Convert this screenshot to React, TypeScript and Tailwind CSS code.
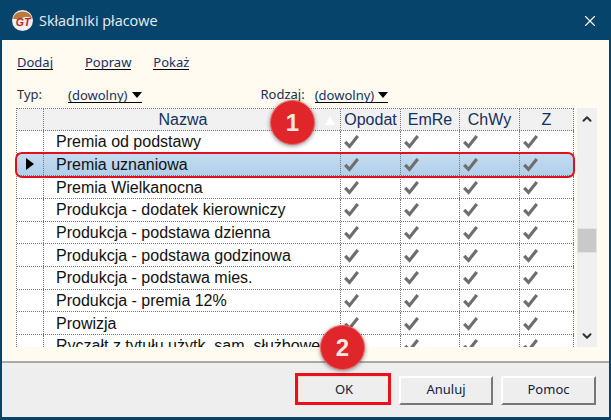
import React from "react";
import { X, ChevronUp, ChevronDown } from "lucide-react";

const rows = [
  "Premia od podstawy",
  "Premia uznaniowa",
  "Premia Wielkanocna",
  "Produkcja - dodatek kierowniczy",
  "Produkcja - podstawa dzienna",
  "Produkcja - podstawa godzinowa",
  "Produkcja - podstawa mies.",
  "Produkcja - premia 12%",
  "Prowizja",
  "Ryczałt z tytułu użytk. sam. służbowego",
];

const checkCols = ["w-[60px]", "w-[59px]", "w-[60px]", "w-[54px]"];

function Check() {
  return (
    <svg width="15" height="15" viewBox="0 0 15 15" className="block">
      <path d="M1.2 7.8 L5.5 12.4 L13.8 2" fill="none" stroke="#6e6e6e" strokeWidth="3.2" />
    </svg>
  );
}

function Logo() {
  return (
    <svg width="21" height="21" viewBox="0 0 20 20" className="block">
      <circle cx="10" cy="10" r="10" fill="#f4efe9" />
      <path d="M0.6 8 A10 10 0 0 1 19.4 8 Q12 4.5 8 9 Q4 9 0.6 8 Z" fill="#b9793c" />
      <text x="10.5" y="15.5" textAnchor="middle" fontSize="10" fontWeight="700" fontStyle="italic" fill="#b3262a" fontFamily="Liberation Sans, sans-serif">GT</text>
    </svg>
  );
}

function Badge({ n, className }: { n: number; className: string }) {
  return (
    <div
      className={`absolute flex h-[45px] w-[45px] items-center justify-center rounded-full border border-[#f0686a] bg-[#e0252b] text-[24px] font-bold text-[#fbe6e0] shadow-[0_1px_4px_rgba(0,0,0,0.45)] ${className}`}
    >
      {n}
    </div>
  );
}

function Dropdown({ className }: { className: string }) {
  return (
    <span className={`flex items-center gap-[4px] border-b border-black leading-[14px] text-[#14305e] ${className}`}>
      (dowolny)
      <span className="h-0 w-0 border-x-[5px] border-t-[6px] border-x-transparent border-t-black" />
    </span>
  );
}

export default function App() {
  return (
    <div className="relative flex h-[420px] w-[611px] flex-col overflow-hidden bg-[#07446b] pt-px font-['Liberation_Sans',sans-serif]">
      {/* title bar */}
      <div className="flex h-[39px] shrink-0 items-center pl-[12px] pr-[12px]">
        <Logo />
        <span className="ml-[6px] font-['Open_Sans',sans-serif] text-[14.4px] text-[#e8eff4]">Składniki płacowe</span>
        <X className="ml-auto h-[18px] w-[18px] text-white" strokeWidth={1.5} />
      </div>

      {/* content */}
      <div className="mx-[2px] flex h-[321px] shrink-0 flex-col bg-[#fffbf0] pl-[14px]">
        <div className="flex h-[33px] items-end pb-[3px] font-['Noto_Sans',sans-serif] text-[13px] text-[#14305e]">
          <span className="ml-[1px] border-b border-black leading-[14px]">Dodaj</span>
          <span className="ml-[32px] border-b border-black leading-[14px]">Popraw</span>
          <span className="ml-[22px] border-b border-black leading-[14px]">Pokaż</span>
        </div>
        <div className="mt-[14px] flex h-[16px] items-center font-['Noto_Sans',sans-serif] text-[13px] text-[#1c2c44]">
          <span className="ml-[1px] w-[51px]">Typ:</span>
          <Dropdown className="" />
          <span className="ml-[119px]">Rodzaj:</span>
          <Dropdown className="ml-[10px]" />
        </div>

        <div className="mt-[5px] flex items-start">
          {/* table */}
          <div className="h-[239px] w-[558px] overflow-hidden border-l border-t border-dotted border-[#777] text-[16px] text-[#111]">
            <div className="flex h-[22px] border-b border-dotted border-[#777] bg-[#f1f1f1] text-[#14305e]">
              <div className="w-[27px] border-r border-dotted border-[#777]" />
              <div className="relative flex w-[297px] items-center justify-center border-r border-dotted border-[#777] pr-[18px]">
                Nazwa
                <span className="absolute right-[5px] top-[7px] h-0 w-0 border-x-[5px] border-b-[9px] border-x-transparent border-b-white" />
              </div>
              {["Opodat", "EmRe", "ChWy", "Z"].map((h, i) => (
                <div key={h} className={`flex items-center justify-center border-r border-dotted border-[#777] ${checkCols[i]}`}>
                  {h}
                </div>
              ))}
            </div>
            {rows.map((r, idx) => (
              <div
                key={r}
                className={`flex h-[22.67px] border-b border-dotted border-[#777] ${idx === 1 ? "bg-gradient-to-b from-[#c4dcf0] to-[#b0cfea]" : "bg-white"}`}
              >
                <div className="flex w-[27px] items-center justify-center border-r border-dotted border-[#777]">
                  {idx === 1 && <span className="h-0 w-0 border-y-[6px] border-l-[8px] border-y-transparent border-l-black" />}
                </div>
                <div className="flex w-[297px] items-center whitespace-nowrap border-r border-dotted border-[#777] pl-[12px] pt-[1px]">
                  {r}
                </div>
                {checkCols.map((c) => (
                  <div key={c} className={`flex items-center border-r border-dotted border-[#777] pl-[3px] ${c}`}>
                    <Check />
                  </div>
                ))}
              </div>
            ))}
          </div>

          {/* scrollbar */}
          <div className="relative ml-[3px] flex h-[239px] w-[20px] flex-col items-center justify-between bg-[#f0f0f0] py-[4px]">
            <ChevronUp className="h-[14px] w-[14px] text-[#333]" strokeWidth={3.5} />
            <div className="absolute left-0 top-[120px] h-[25px] w-[20px] border border-[#e4e4e4] bg-[#c9c9c9]" />
            <ChevronDown className="h-[14px] w-[14px] text-[#333]" strokeWidth={3.5} />
          </div>
        </div>
      </div>

      {/* footer */}
      <div className="mx-[2px] flex h-[56px] shrink-0 items-center justify-end gap-[8px] border-t-2 border-[#a8a8a8] bg-[#eeeeee] pr-[13px] text-[13px] text-[#14203c]">
        <button className="relative mr-[1px] h-[28px] w-[92px] border border-[#ddd] border-b-[#777] border-r-[#777] font-['Noto_Sans',sans-serif]">OK</button>
        <button className="h-[29px] w-[94px] border-2 border-[#fff] border-b-[#777] border-r-[#777] font-['Noto_Sans',sans-serif]">Anuluj</button>
        <button className="h-[29px] w-[95px] border-2 border-[#fff] border-b-[#777] border-r-[#777] font-['Noto_Sans',sans-serif]">Pomoc</button>
      </div>
      <div className="grow bg-[#07446b]" />

      {/* annotations */}
      <div className="absolute left-[15px] top-[152px] h-[26px] w-[560px] rounded-[7px] border-[2.5px] border-[#e0101c]" />
      <div className="absolute left-[295px] top-[373px] h-[32px] w-[96px] border-[3px] border-[#ee0f1c]" />
      <Badge n={1} className="left-[270px] top-[100px]" />
      <Badge n={2} className="left-[320px] top-[325px]" />
    </div>
  );
}
